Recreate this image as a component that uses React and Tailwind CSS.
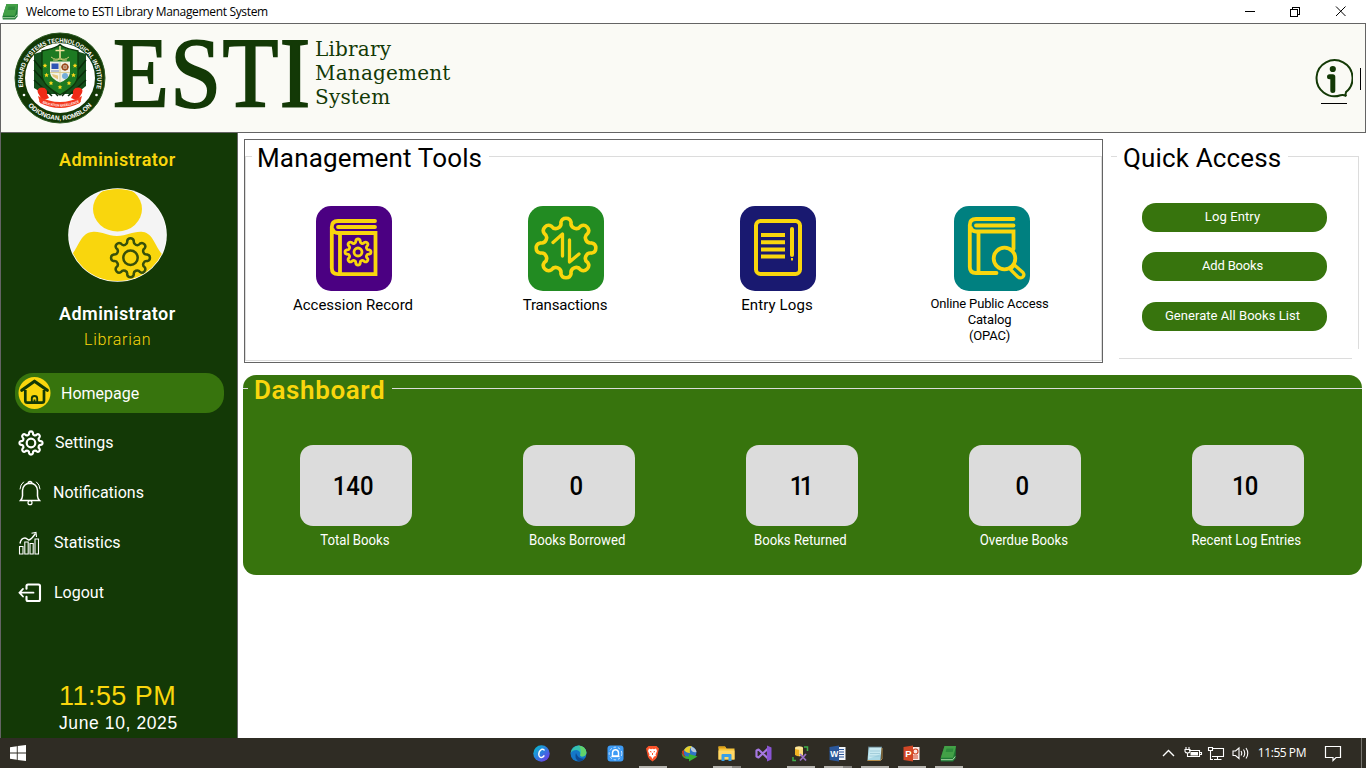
const YELLOW = "#f9d60d";
const DARK = "#133906";

function gearPath(cx, cy, r, lobes = 8) {
  const half = Math.PI / (lobes * 2);
  const mid = r / (1 + Math.sin(half) * 0.82);
  const arc = mid * Math.sin(half) * 1.02;
  let d = "";
  for (let i = 0; i < lobes; i++) {
    const a = (i * 2 * Math.PI) / lobes - Math.PI / 2;
    const p = (t) => `${(cx + mid * Math.cos(t)).toFixed(2)} ${(cy + mid * Math.sin(t)).toFixed(2)}`;
    d += `${i ? "" : "M" + p(a - half)}A${arc} ${arc} 0 0 1 ${p(a + half)}A${arc} ${arc} 0 0 0 ${p(a + 3 * half)}`;
  }
  return d + "Z";
}

function T({ className = "", children }) {
  return <span className={`block w-max whitespace-pre ${className}`}>{children}</span>;
}

function BookIcon() {
  return (
    <svg width="17" height="17" viewBox="0 0 17 17">
      <path d="M4.500 1H16L15.500 13.500L13 16.500H.8L.5 13.500z" fill="#1f7a35" />
      <path d="M4.500 1H16L13 12.800H.8z" fill="#43a047" />
      <path d="M6.500 3.500H13.500L12.700 7H5.600z" fill="#2e8b3c" />
      <path d="M1 14.700H12.700L15.200 11.500" stroke="#b9e0b0" strokeWidth=".9" fill="none" />
    </svg>
  );
}

function Seal() {
  return (
    <svg width="92" height="92" viewBox="0 0 92 92">
      <circle cx="46" cy="46" r="45" fill={DARK} />
      <circle cx="46" cy="46" r="45" fill="none" stroke="#2c5a22" strokeWidth="1" />
      <circle cx="46" cy="46" r="35" fill="#fff" />
      <defs>
        <path id="topArc" d="M9.600 56A37.300 37.300 0 1 1 82.400 56" />
        <path id="bottomArc" d="M8 64.500A42.300 42.300 0 0 0 84 64.500" />
      </defs>
      <g fill="#fff" fontFamily="'Liberation Sans', Arial, sans-serif" fontWeight="bold">
        <text fontSize="6.400"><textPath href="#topArc" startOffset="1" textLength="133" lengthAdjust="spacingAndGlyphs">ERHARD SYSTEMS TECHNOLOGICAL INSTITUTE</textPath></text>
        <text fontSize="6.6"><textPath href="#bottomArc" startOffset="11" textLength="72" lengthAdjust="spacingAndGlyphs">ODIONGAN, ROMBLON</textPath></text>
      </g>
      <circle cx="10" cy="63" r="1.3" fill="#fff" />
      <circle cx="82.500" cy="63" r="1.3" fill="#fff" />
      <path d="M20 22L30 19H62L72 22V54L62 62H30L20 56z" fill="#14501c" />
      <path d="M20 28L46 60M20 38L44 64M20 48L38 64M72 28L46 60M72 38L48 64M72 48L54 64" stroke="#0a2d0b" strokeWidth="1.6" />
      <path d="M46 12.500C41 17.500 34 17 28 19V42C28 52 36 57 46 63C56 57 64 52 64 42V19C58 17 51 17.500 46 12.500z" fill="#1d7a22" stroke="#0d3a0b" strokeWidth="1.4" />
      <path d="M46 14V26M41.500 18.500H50.500" stroke="#f3e3a0" strokeWidth="1.5" />
      <path d="M37 25q5 4 9 1q4 3 9-1M39 28q4 1 7-1q3 2 7 1" stroke="#c9c878" strokeWidth="1" fill="none" />
      <path d="M36 29.500H56V41Q55 47 46 50.500Q37 47 36 41z" fill="#f2f1e4" />
      <rect x="37.500" y="31.500" width="7" height="5.500" fill="#2f55b5" />
      <path d="M37 39h8" stroke="#7d8fc0" strokeWidth="1" />
      <circle cx="51" cy="35" r="2.800" fill="none" stroke="#9a4a1c" strokeWidth="1.500" />
      <path d="M47 35h8M51 31v8" stroke="#9a4a1c" strokeWidth=".8" />
      <path d="M38 42l6 1.500v4l-5-3z" fill="#e6c47a" />
      <circle cx="51" cy="44" r="3" fill="#74add8" />
      <path d="M46 30V50M36 40.500H56" stroke="#d8c98a" strokeWidth=".9" />
      <g fill="#ffd91a">
        {[[31, 33.5], [61, 33.5], [32.5, 43], [59.5, 43], [37, 51], [55, 51], [46, 55]].map(([x, y]) => (
          <path key={`${x}-${y}`} transform={`translate(${x} ${y})`} d="M0-2.300.7-.7 2.300-.6 1.100.5 1.500 2.200 0 1.300-1.500 2.200-1.100.5-2.300-.6-.7-.7z" />
        ))}
      </g>
      <path d="M24 61Q22 56 28 55.500Q34 56 33 62L35 66L25 70L27 66z" fill="#ef2a17" />
      <path d="M68 61Q70 56 64 55.500Q58 56 59 62L57 66L67 70L65 66z" fill="#ef2a17" />
      <path d="M24 64Q46 76 68 64L66 71Q46 81 26 71z" fill="#f43a20" />
      <path id="ribbon" d="M27 70.500Q46 78.500 65 70.500" fill="none" />
      <text fill="#fff" fontFamily="'Liberation Sans', Arial, sans-serif" fontWeight="bold" fontSize="3.4"><textPath href="#ribbon" startOffset="1.5" textLength="38" lengthAdjust="spacingAndGlyphs">EDUCATION EXCELLENCE</textPath></text>
    </svg>
  );
}

function InfoIcon() {
  return (
    <svg width="40" height="40" viewBox="0 0 40 40" fill="none">
      <path d="M32.500 33.500A18 18 0 1 0 27.500 36.200Q31 35.500 33.200 37.200Q31.800 35 33.500 32.500" stroke={DARK} strokeWidth="2" />
      <circle cx="19.800" cy="10" r="3.100" fill={DARK} />
      <path d="M16.500 17.800H19.800V31.500" stroke={DARK} strokeWidth="5" strokeLinecap="round" strokeLinejoin="round" />
    </svg>
  );
}

function Avatar() {
  return (
    <svg width="99" height="94" viewBox="0 0 99 94">
      <defs><clipPath id="avatarClip"><ellipse cx="49.500" cy="47" rx="48.500" ry="46" /></clipPath></defs>
      <ellipse cx="49.500" cy="47" rx="49.300" ry="46.800" fill="#fff" />
      <g clipPath="url(#avatarClip)">
        <rect width="99" height="94" fill="#f4f4f4" />
        <ellipse cx="49.500" cy="21" rx="24.500" ry="22.500" fill={YELLOW} />
        <path d="M5 65C10 59 14 44 24 44C34 43 38 48 49 48C60 48 65 43 75 44C85 45 88 60 94 66V94H5z" fill={YELLOW} />
      </g>
      <path d={gearPath(62.5, 69.8, 19.8)} fill="none" stroke="#37500a" strokeWidth="2.500" />
      <circle cx="62.500" cy="69.800" r="7.200" fill="none" stroke="#37500a" strokeWidth="2.500" />
    </svg>
  );
}

const HomeIcon = () => (
  <svg width="34" height="34" viewBox="0 0 34 34" fill="none">
    <circle cx="16.500" cy="17" r="16" fill={YELLOW} />
    <path d="M3.800 14.300L16.500 5.200L29.300 14.300" stroke={DARK} strokeWidth="3.200" strokeLinecap="round" strokeLinejoin="round" />
    <path d="M7.300 14V24.500Q7.300 26.700 9.500 26.700H23.800Q26 26.700 26 24.500V14" stroke={DARK} strokeWidth="2.700" />
    <path d="M13.800 26V22.500Q13.800 20 16.500 20Q19.200 20 19.200 22.500V26M16.500 23.500V26" stroke={DARK} strokeWidth="1.900" />
  </svg>
);
const SettingsIcon = () => (
  <svg width="26" height="26" viewBox="0 0 26 26" fill="none" stroke="#fff" strokeWidth="2.200">
    <path d={gearPath(13, 13, 11.8)} />
    <circle cx="13" cy="13" r="4.300" />
  </svg>
);
const BellIcon = () => (
  <svg width="22" height="26" viewBox="0 0 22 26" fill="none" stroke="#fff" strokeWidth="1.500" strokeLinecap="round">
    <path d="M3.500 16V10.500Q4 3.500 11 3.200Q18 3.500 18.500 10.500V16Q18.700 18.500 20.500 20.500H1.500Q3.300 18.500 3.500 16z" />
    <path d="M9.300 3V2.300Q11 .8 12.700 2.300V3" />
    <circle cx="11" cy="22.700" r="2" strokeWidth="1.200" />
    <path d="M1 9Q1.200 4.500 4.500 2M21 9Q20.800 4.500 17.500 2" strokeWidth="1" />
  </svg>
);
const StatsIcon = () => (
  <svg width="22" height="26" viewBox="0 0 22 26" fill="none" stroke="#fff" strokeWidth="1.100">
    <path d="M1.500 24V16.500H5V24zM6.800 24V12H10.200V24zM12 24V13.500H15.200V24zM17 24V9H20.500V24z" />
    <path d="M2 13.500Q3 8 7 8Q8 8 10.500 10Q13 10 17.500 3.500" strokeWidth="1.400" />
    <path d="M13.500 3.300L18 2.500L18.500 7" />
  </svg>
);
const LogoutIcon = () => (
  <svg width="24" height="20" viewBox="0 0 24 20" fill="none" stroke="#fff" strokeWidth="2.100" strokeLinecap="round">
    <path d="M8.500 5.800V3Q8.500 1.500 10 1.500H20.500Q22 1.500 22 3V16.500Q22 18 20.500 18H10Q8.500 18 8.500 16.500V13.700" />
    <path d="M2 9.700H15.500M5 5.900L1.500 9.700L5 13.500" strokeWidth="1.800" />
  </svg>
);

const NAV = [
  { text: "Settings", icon: <SettingsIcon />, pad: "pl-[17px]", gap: "ml-[11px]" },
  { text: "Notifications", icon: <BellIcon />, pad: "pl-[18px]", gap: "ml-3" },
  { text: "Statistics", icon: <StatsIcon />, pad: "pl-[17px]", gap: "ml-[14px]" },
  { text: "Logout", icon: <LogoutIcon />, pad: "pl-[17px]", gap: "ml-3" },
];

const AccessionIcon = () => (
  <svg width="76" height="85" viewBox="0 0 76 85" fill="none" stroke={YELLOW} strokeWidth="3.800" strokeLinecap="round">
    <path d="M59 15H22Q15.800 15 15.800 21V62Q15.800 68.200 22 68.200H59.500V27H22Q18 27 17 24M59 21H22" />
    <path d="M24 28V67" />
    <path d={gearPath(42, 46, 13.2)} strokeWidth="2.800" />
    <circle cx="42" cy="46" r="4" strokeWidth="2.800" />
  </svg>
);
const TransactionsIcon = () => (
  <svg width="76" height="85" viewBox="0 0 76 85" fill="none" stroke={YELLOW} strokeWidth="3.600" strokeLinecap="round" strokeLinejoin="round">
    <path d={gearPath(38, 42, 30.3)} />
    <path d="M25 36.500L34.500 28V50M41.500 34V56L51 48" strokeWidth="3.300" />
  </svg>
);
const LogsIcon = () => (
  <svg width="76" height="85" viewBox="0 0 76 85" fill="none" stroke={YELLOW} strokeWidth="4">
    <rect x="16" y="15" width="44" height="53" rx="4.500" />
    <path d="M21 29H45M21 36.200H45M21 43.500H45M21 50.500H45" />
    <path d="M52 23V49" strokeLinecap="round" />
    <path d="M52 52V54.500" strokeWidth="2" />
  </svg>
);
const OpacIcon = () => (
  <svg width="76" height="85" viewBox="0 0 76 85" fill="none" stroke={YELLOW} strokeWidth="3.800" strokeLinecap="round">
    <path d="M59.500 13H22Q15.800 13 15.800 19V61Q15.800 67 22 67H42.500M59.500 43V25.500H22Q18 25.500 17 22M59.500 19.500H22M24.500 26.500V66" />
    <circle cx="50.500" cy="52.500" r="10.800" />
    <path d="M56.500 63.500L60.500 59L69 66.500Q71 69 68.500 71.200Q66 73 63.500 70.500z" strokeWidth="3.200" strokeLinejoin="round" />
  </svg>
);

const TOOLS = [
  { bg: "bg-[#4b0082]", icon: <AccessionIcon />, lines: ["Accession Record"], adjust: "" },
  { bg: "bg-[#228b22]", icon: <TransactionsIcon />, lines: ["Transactions"], adjust: "tracking-[-0.15px]" },
  { bg: "bg-[#191970]", icon: <LogsIcon />, lines: ["Entry Logs"], adjust: "tracking-[0.1px]" },
  { bg: "bg-[#008080]", icon: <OpacIcon />, lines: ["Online Public Access", "Catalog", "(OPAC)"], small: true, adjust: "tracking-[-0.15px]" },
];

const STATS = [
  ["140", "Total Books", "scale-x-[0.92]"],
  ["0", "Books Borrowed", "scale-x-[0.92]"],
  ["11", "Books Returned", "tracking-[-4px] scale-x-[0.92] pl-[2px]"],
  ["0", "Overdue Books", "scale-x-[0.92]"],
  ["10", "Recent Log Entries", "tracking-[-1px] scale-x-[0.92]"],
];

const TASKS = [
  { icon: <svg width="17" height="17" viewBox="0 0 17 17"><defs><linearGradient id="cg" x1="0" y1="0" x2="1" y2="1"><stop stopColor="#00c4cc" /><stop offset=".5" stopColor="#2f7be0" /><stop offset="1" stopColor="#7d2ae8" /></linearGradient></defs><circle cx="8.500" cy="8.500" r="8.200" fill="url(#cg)" /><path d="M11.500 5.500Q10.500 3.500 8.300 4.500Q5.500 6.500 5.800 9.800Q6.500 13 9 12.300Q10.500 11.700 11.300 10.300" fill="none" stroke="#fff" strokeWidth="1.400" /></svg> },
  { icon: <svg width="17" height="17" viewBox="0 0 17 17"><circle cx="8.500" cy="8.500" r="8" fill="#1478c8" /><path d="M.6 8Q2 1 8.500.5Q15.500 1 16.400 7.500Q16 11.500 12 11.500Q9.500 11 10.500 9Q10 5.500 6.500 5Q2.500 5 .6 8z" fill="#35c1b0" /><path d="M8.500.5Q15.500 1 16.400 7.500Q16 11.500 12 11.500Q9.500 11 10.500 9Q12 4 8.500.5z" fill="#62d36b" /><path d="M6 8Q4 13 8.500 16.500Q12 16.500 15 13.500Q8 14.500 6 8z" fill="#0c4a94" /></svg> },
  { icon: <svg width="17" height="17" viewBox="0 0 17 17"><rect x=".5" y=".5" width="16" height="16" rx="3" fill="#3d9bf5" /><circle cx="8.500" cy="8.500" r="6.300" fill="none" stroke="#cfe7ff" strokeWidth="1" strokeDasharray="2.500 2" /><path d="M5.500 11V7.500Q6 4.800 8.500 4.800Q11 4.800 11.500 7.500V11z" fill="none" stroke="#fff" strokeWidth="1.400" /><path d="M4.500 11.500h8" stroke="#fff" strokeWidth="1.300" /></svg> },
  { on: true, icon: <svg width="15" height="17" viewBox="0 0 15 17"><path d="M3.500 1H11.500L14 3.500L13.500 5.500L12 12Q11 14.500 7.500 16.500Q4 14.500 3 12L1.500 5.500L1 3.500z" fill="#fb542b" /><path d="M4 3.500L6 4.200L7.500 3.800L9 4.200L11 3.500L12 6L10.500 9.500L11 11L9 11.500L7.500 14L6 11.500L4 11L4.500 9.500L3 6z" fill="#fff" /><path d="M5 6.500L6.500 7M10 6.500L8.500 7M7.500 8V10" stroke="#fb542b" strokeWidth="1" /></svg> },
  { icon: <svg width="17" height="17" viewBox="0 0 17 17"><circle cx="9" cy="7.500" r="6.500" fill="#2f74c8" /><path d="M3 5Q6 .5 11 1.200Q8 4 9 8Q5 8 3 5z" fill="#e8d22a" /><path d="M10 1.500Q15 3 15.500 7Q12 8 10 5z" fill="#b9c8d8" /><path d="M.5 8Q1 14 8 14L8 16.500L16.500 11.500L8 9V11.500Q4 12 .5 8z" fill="#38b435" /><path d="M1 6Q.5 11 5 13Q2.500 10 3 5z" fill="#c33a25" /></svg> },
  { on: true, split: true, icon: <svg width="17" height="17" viewBox="0 0 17 17"><path d="M.5 1.500H7L8.500 3.500H16.500V14.500H.5z" fill="#f8c63d" /><path d="M.5 1.500H7L8.500 3.500H.5z" fill="#dfa016" /><path d="M.5 5.500H16.500V14.500H.5z" fill="#ffd867" /><path d="M3.500 16V10Q3.500 9 4.500 9H12.500Q13.500 9 13.500 10V16H10.500V12H6.500V16z" fill="#3aa0e8" /></svg> },
  { icon: <svg width="17" height="17" viewBox="0 0 17 17"><path d="M1.500 5.500L3.500 4.500L13 13.500V3.500L3.500 12.500L1.500 11.500z" fill="none" stroke="#a678e0" strokeWidth="2.200" strokeLinejoin="round" /><path d="M12 .5L16.500 2.500V14.500L12 16.500z" fill="#8a55d4" /></svg> },
  { on: true, icon: <svg width="17" height="17" viewBox="0 0 17 17"><path d="M3 3V10Q7 12.500 11 10V3z" fill="#f0b323" /><path d="M7 3V11.300Q9.500 11.300 11 10V3z" fill="#fbdc7a" /><ellipse cx="7" cy="3" rx="4" ry="1.700" fill="#ffe89a" /><path d="M12 2H15.500V6M4 15.500H1V12" fill="none" stroke="#3fae49" strokeWidth="1.500" /><path d="M8 9L14 15.500M14 9L8 15.500" stroke="#9a6fc4" strokeWidth="1.800" /></svg> },
  { on: true, split: true, icon: <svg width="17" height="17" viewBox="0 0 17 17"><path d="M8 2H16.500V15H8z" fill="#f3f6fb" /><path d="M10 4.500H15M10 7H15M10 9.500H15M10 12H15" stroke="#2b579a" strokeWidth="1" /><path d="M.5 2L10 .5V16.500L.5 15z" fill="#2b579a" /><text x="1.300" y="11.500" fontSize="8.500" fontWeight="bold" fontFamily="'Liberation Sans', Arial, sans-serif" fill="#fff">W</text></svg> },
  { on: true, icon: <svg width="17" height="17" viewBox="0 0 17 17"><path d="M2.500 2H15.500L14.500 15.500H1.500z" fill="#a9d8e6" /><path d="M4 2L15.500 2L14.900 9L2 14z" fill="#c8e9f1" /><path d="M1.500 15.500H14.500L16 14V3" fill="none" stroke="#b58d4a" strokeWidth="1" /><path d="M3 1V3M5 1V3M7 1V3M9 1V3M11 1V3M13 1V3M15 1V3" stroke="#56707a" strokeWidth=".9" /><path d="M4 6H14M4 8.500H14M3.500 11H13.500" stroke="#8bbccc" strokeWidth=".6" /></svg> },
  { on: true, icon: <svg width="17" height="17" viewBox="0 0 17 17"><path d="M8 2H16.500V15H8z" fill="#fbeae6" /><path d="M10 11H15M10 13H15" stroke="#d24726" strokeWidth="1" /><circle cx="12.500" cy="6.500" r="2.500" fill="none" stroke="#d24726" strokeWidth="1.200" /><path d="M.5 2L10 .5V16.500L.5 15z" fill="#d24726" /><text x="2.300" y="12" fontSize="9.500" fontWeight="bold" fontFamily="'Liberation Sans', Arial, sans-serif" fill="#fff">P</text></svg> },
  { on: true, icon: <BookIcon /> },
];

const BUTTONS = [
  ["Log Entry", "mt-[47px]", "tracking-[0.1px]"],
  ["Add Books", "mt-5", "tracking-[-0.2px]"],
  ["Generate All Books List", "mt-[21px]", "tracking-[0.05px]"],
];

export default function App() {
  return (
    <div className="flex h-[768px] w-[1366px] flex-col overflow-hidden bg-white font-[Roboto,'Noto_Sans',sans-serif] text-black">
      <div className="flex h-[23px] shrink-0 items-center pl-[2px]">
        <BookIcon />
        <T className="ml-[7px] font-['Open_Sans',sans-serif] text-[12px] tracking-[-0.34px]">Welcome to ESTI Library Management System</T>
        <svg className="ml-auto mr-[19px]" width="104" height="12" viewBox="0 0 104 12" fill="none" stroke="#000" shapeRendering="crispEdges">
          <path d="M2 5.500H12M47.500 3.500H54.500V10.500H47.500zM49.500 3V1.500H56.500V8.500H55" />
          <path d="M93 .5L102.500 10M102.500 .5L93 10" shapeRendering="auto" />
        </svg>
      </div>
      <header className="flex h-[110px] shrink-0 border border-[#646464] bg-[#fafaf5] text-[#133906]">
        <div className="ml-[13px] mt-[8px]"><Seal /></div>
        <div className="ml-[7px] mt-[4px] h-[90px] w-[202px]">
          <T className="origin-left scale-x-[0.915] font-['Liberation_Serif',serif] text-[100px] leading-[90px] tracking-[1.5px] [-webkit-text-stroke:1.9px_#133906]">ESTI</T>
        </div>
        <div className="mt-[13px] font-['DejaVu_Serif',serif] text-[20px] leading-[24px] tracking-[0.2px]">
          <T>Library</T>
          <T>Management</T>
          <T>System</T>
        </div>
        <div className="ml-auto flex flex-col items-center pt-[35px]">
          <InfoIcon />
          <div className="ml-[2px] mt-[4px] h-px w-[26px] bg-black" />
        </div>
        <div className="ml-[7px] mr-[4px] mt-[44px] h-[22px] w-px bg-black" />
      </header>

      <div className="flex h-[605px] shrink-0">
        <aside className="flex w-[238px] flex-col border-x border-[#646464] bg-[#133906] text-white">
          <T className="ml-[58px] mt-[15px] text-[18px] font-semibold leading-[24px] tracking-[0.45px] text-[#f9d60d]">Administrator</T>
          <div className="ml-[67px] mt-[16px] h-[94px]"><Avatar /></div>
          <T className="ml-[58px] mt-[20px] text-[18px] font-semibold leading-[24px] tracking-[0.45px]">Administrator</T>
          <T className="ml-[83px] mt-[3px] text-[16px] font-light leading-[22px] tracking-[0.7px] text-[#f9d60d]">Librarian</T>
          <div className="ml-[14px] mt-[22px] flex h-10 w-[209px] items-center rounded-[18px] bg-[#37740d]">
            <div className="ml-[3px]"><HomeIcon /></div>
            <T className="ml-[9px] pt-px text-[16px]">Homepage</T>
          </div>
          <div className="mt-[5px] flex flex-col">
            {NAV.map((n) => (
              <div key={n.text} className={`flex h-[50px] items-center ${n.pad}`}>
                {n.icon}
                <T className={`${n.gap} text-[16px]`}>{n.text}</T>
              </div>
            ))}
          </div>
          <div className="mt-auto pb-[3px] font-['Liberation_Sans',sans-serif]">
            <T className="ml-[58px] text-[27px] leading-[30px] tracking-[0.45px] text-[#f9d60d]">11:55 PM</T>
            <T className="ml-[58px] text-[17.500px] leading-[24px] tracking-[0.6px]">June 10, 2025</T>
          </div>
        </aside>

        <main className="flex flex-1 flex-col pl-[5px] pt-[6px]">
          <div className="flex h-[224px]">
            <section className="ml-px h-[224px] w-[859px] border border-[#646464] pt-[16px]">
              <div className="flex h-[205px] flex-col border border-[#dcdcdc]">
                <div className="-mt-[15px] ml-[6px] flex h-[32px] w-[237px] items-center bg-white pl-[5px]">
                  <T className="text-[26px] tracking-[0.15px]">Management Tools</T>
                </div>
                <div className="mt-[32px] flex pl-[2px]">
                  {TOOLS.map((t) => (
                    <div key={t.bg} className={`flex flex-col items-center ${t.small ? "w-[216px]" : "w-[212px]"}`}>
                      <div className={`h-[85px] w-[76px] rounded-[15px] ${t.bg}`}>{t.icon}</div>
                      <div className={t.small ? "mt-[5px] flex flex-col items-center pr-[5px] text-[13px] leading-4" : "mt-[4px] flex flex-col items-center pr-[2px] text-[15px] leading-5"}>
                        {t.lines.map((s) => <T key={s} className={t.adjust}>{s}</T>)}
                      </div>
                    </div>
                  ))}
                </div>
              </div>
            </section>
            <section className="ml-[8px] flex w-[248px] flex-col pt-[2px]">
              <div className="flex h-[31px] items-center">
                <div className="h-px w-[6px] bg-[#dcdcdc]" />
                <T className="ml-[6px] pt-[3px] text-[26px] tracking-[0.15px]">Quick Access</T>
                <div className="ml-auto h-px w-[71px] bg-[#dcdcdc]" />
              </div>
              <div className="-mt-[16px] flex h-[193px] flex-col items-center border-r border-[#dcdcdc] pr-px">
                {BUTTONS.map(([s, m, adjust]) => (
                  <button key={s} className={`flex h-[29px] w-[185px] shrink-0 items-center justify-center rounded-[14px] bg-[#37740d] pb-[2px] pr-[3px] text-[13px] text-white ${m}`}>
                    <T className={adjust}>{s}</T>
                  </button>
                ))}
              </div>
              <div className="ml-[8px] mt-[9px] h-px w-[233px] bg-[#dcdcdc]" />
            </section>
          </div>

          <section className="mt-3 flex h-[200px] w-[1119px] flex-col rounded-[13px] bg-[#37740d] text-white">
            <div className="flex h-[27px] items-center">
              <div className="h-px w-[5px] bg-[#dcdcdc]" />
              <T className="ml-[6px] pt-[3px] text-[26px] font-semibold leading-[30px] tracking-[0.6px] text-[#f9d60d]">Dashboard</T>
              <div className="ml-auto h-px w-[970px] bg-[#dcdcdc]" />
            </div>
            <div className="mt-[43px] flex">
              {STATS.map(([n, label, adjust]) => (
                <div key={label} className="flex w-[223px] shrink-0 flex-col items-center pl-[2px]">
                  <div className="flex h-[81px] w-[112px] items-center justify-center rounded-[13px] bg-[#dcdcdc] pr-[5px] pt-[2px] text-[26px] font-medium text-black">
                    <T className={adjust}>{n}</T>
                  </div>
                  <div className="mt-[4px] pr-[2px] text-[14px] leading-5"><T className="scale-x-[0.94]">{label}</T></div>
                </div>
              ))}
            </div>
          </section>
        </main>
      </div>

      <footer className="flex h-[30px] shrink-0 items-stretch bg-[#2f2c24] font-['Open_Sans',sans-serif] text-white">
        <div className="flex w-[523px] items-center pl-[10px]">
          <svg width="16" height="16" viewBox="0 0 16 16" fill="#fff"><path d="M0 2.200L6.800 1.200V7.500H0zM7.700 1.100L16 0V7.500H7.700zM0 8.400H6.800V14.800L0 13.800zM7.700 8.400H16V16L7.700 14.900z" /></svg>
        </div>
        {TASKS.map((t, i) => (
          <div key={i} className="flex w-[37px] shrink-0 flex-col items-center">
            <div className="flex h-[28px] items-center pt-[2px]">{t.icon}</div>
            {t.on && <div className="flex h-[2px] w-[28px] bg-[#b5b3ae]">{t.split && <span className="ml-auto w-[9px] bg-[#85837e]" />}</div>}
          </div>
        ))}
        <div className="ml-auto flex items-center">
          <svg width="88" height="18" viewBox="0 0 88 18" fill="none" stroke="#fff" strokeWidth="1.100">
            <path d="M1 12L6.500 6.500L12 12" strokeWidth="1.400" />
            <path d="M27 6.500H37.500V12.500H26M37.500 8.500H39.500V10.500H37.500" />
            <rect x="28.500" y="8" width="7.500" height="3.500" fill="#fff" stroke="none" />
            <path d="M24 3V5.500M27 3V5.500M23 5.500H28V7.500Q27.500 9 25.500 9Q23.500 9 23 7.500zM25.500 9V13" />
            <path d="M51 4.500H61.500V12.500H50M55.500 12.500V15.500M52 15.500H59.500M46.500 3.500H50.500V6.500H46.500zM48.500 6.500V15.500H51" />
            <path d="M71 7V11.500H73.500L77 14.500V4L73.500 7zM79 7Q80.500 9.200 79 11.500M81.500 5.500Q84 9.200 81.500 13M84 4Q87.500 9.200 84 14.500" />
          </svg>
          <T className="ml-[8px] text-[12px] tracking-[-0.45px]">11:55 PM</T>
          <svg className="ml-[18px]" width="18" height="18" viewBox="0 0 18 18" fill="none" stroke="#fff" strokeWidth="1.200"><path d="M1.500 2.500H16.500V13.500H12L9 16.500V13.500H1.500z" /></svg>
          <div className="ml-[19px] mr-[4px] h-[30px] w-px bg-[#77756f]" />
        </div>
      </footer>
    </div>
  );
}
